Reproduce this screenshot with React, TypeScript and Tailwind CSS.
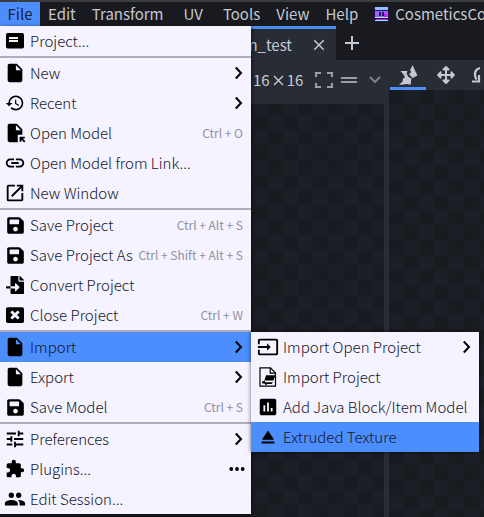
import { useState, type ReactNode } from "react";
import { FaArrowsAlt, FaFileImport, FaSave, FaWindowClose } from "react-icons/fa";
import {
  MdAdd,
  MdAssessment,
  MdClose,
  MdEject,
  MdExtension,
  MdFileOpen,
  MdHistory,
  MdInput,
  MdInsertDriveFile,
  MdLink,
  MdOpenInNew,
  MdPeople,
  MdTune,
} from "react-icons/md";

type Item = {
  icon: ReactNode;
  label: string;
  keys?: string;
  more?: "arrow" | "dots";
};

const md = "size-[22px]";
const save = <FaSave className="size-[19px]" />;
const file = <MdInsertDriveFile className={md} />;

function ProjectIcon() {
  return (
    <svg viewBox="0 0 18 16" className="h-4 w-[18px]" fill="none">
      <rect width="18" height="15.5" rx="1.8" fill="#000" />
      <path d="M3 4h9v2H3zM3 7h9v2H3z" fill="#f4f3ff" />
    </svg>
  );
}

function ProjectFileIcon() {
  return (
    <svg viewBox="0 0 20 20" className="size-5" fill="none" stroke="currentColor">
      <path d="M2 .8h10.5L17.5 6v13.2H2z" strokeWidth="1.2" />
      <path d="M12.2 1v5.2h5" strokeWidth="1.2" />
      <path d="M8 8.3h9.4l-2 5.2H6.4zM4 14.5l3-.8v1.6h8l-1.4 1.6H9l-.8 1.8-1.4-2-2.8-.4z" fill="currentColor" stroke="none" />
    </svg>
  );
}

const groups: Item[][] = [
  [{ icon: <ProjectIcon />, label: "Project..." }],
  [
    { icon: file, label: "New", more: "arrow" },
    { icon: <MdHistory className="size-5" />, label: "Recent", more: "arrow" },
    { icon: <MdFileOpen className={md} />, label: "Open Model", keys: "Ctrl + O" },
    { icon: <MdLink className={md} />, label: "Open Model from Link..." },
    { icon: <MdOpenInNew className={md} />, label: "New Window" },
  ],
  [
    { icon: save, label: "Save Project", keys: "Ctrl + Alt + S" },
    { icon: save, label: "Save Project As", keys: "Ctrl + Shift + Alt + S" },
    { icon: <FaFileImport className="size-[18px]" />, label: "Convert Project" },
    { icon: <FaWindowClose className="size-[18px]" />, label: "Close Project", keys: "Ctrl + W" },
  ],
  [
    { icon: file, label: "Import", more: "arrow" },
    { icon: file, label: "Export", more: "arrow" },
    { icon: save, label: "Save Model", keys: "Ctrl + S" },
  ],
  [
    { icon: <MdTune className={md} />, label: "Preferences", more: "arrow" },
    { icon: <MdExtension className="size-5" />, label: "Plugins...", more: "dots" },
    { icon: <MdPeople className={md} />, label: "Edit Session..." },
  ],
];

const importItems: Item[] = [
  { icon: <MdInput className={md} />, label: "Import Open Project", more: "arrow" },
  { icon: <ProjectFileIcon />, label: "Import Project" },
  { icon: <MdAssessment className={md} />, label: "Add Java Block/Item Model" },
  { icon: <MdEject className={md} />, label: "Extruded Texture" },
];

function MenuRow({ item, active, nested, onHover }: { item: Item; active: boolean; nested?: boolean; onHover: () => void }) {
  return (
    <button
      type="button"
      role="menuitem"
      onMouseEnter={onHover}
      className={`flex h-[30px] w-full items-center pr-2 text-left font-light text-black ${nested ? "pl-1.5" : "pl-1"} ${active ? "bg-[#4c8efe]" : ""}`}
    >
      <span className="flex w-[22px] shrink-0 justify-center">{item.icon}</span>
      <span className="ml-1 grow whitespace-nowrap text-[#15161f]">{item.label}</span>
      {item.keys && <span className="text-[12px] font-normal whitespace-nowrap text-[#92909f]">{item.keys}</span>}
      {item.more === "arrow" && (
        <svg viewBox="0 0 9 14" className="h-[14px] w-[9px]" fill="none" stroke="currentColor" strokeWidth="2">
          <path d="M1.8 1.5 7 7l-5.2 5.5" />
        </svg>
      )}
      {item.more === "dots" && (
        <svg viewBox="0 0 16 4" className="-mr-0.5 h-1 w-4" fill="currentColor">
          <circle cx="2.3" cy="2" r="1.9" />
          <circle cx="8" cy="2" r="1.9" />
          <circle cx="13.7" cy="2" r="1.9" />
        </svg>
      )}
    </button>
  );
}

export default function App() {
  const [hovered, setHovered] = useState("Import");
  const [subHovered, setSubHovered] = useState("Extruded Texture");
  return (
    <div className="relative flex h-screen flex-col overflow-hidden bg-[#181a1f] font-['Noto_Sans_CJK_SC','Open_Sans',sans-serif] text-[15px] leading-6 text-[#c5c8d2]">
      <nav className="flex h-[26px] shrink-0 border-t-2 border-[#3b3c40] whitespace-nowrap">
        <button type="button" className="w-10 shrink-0 bg-[#4c8efe] text-[#20212b]">File</button>
        <button type="button" className="shrink-0 px-2">Edit</button>
        <button type="button" className="shrink-0 px-2">Transform</button>
        <button type="button" className="ml-1 shrink-0 px-2">UV</button>
        <button type="button" className="ml-1 shrink-0 px-2">Tools</button>
        <button type="button" className="shrink-0 px-2">View</button>
        <button type="button" className="shrink-0 px-2">Help</button>
        <button type="button" className="ml-1 flex shrink-0 items-center gap-1.5 pl-1">
          <svg viewBox="0 0 15 15" className="size-[15px]" shapeRendering="crispEdges">
            <path fill="#22124a" d="M0 0h15v15H0z" />
            <path fill="#8fc0ff" d="M1 0h13v3H1z" />
            <path fill="#9a62ff" d="M1 4h13v6H1z" />
            <path fill="#2b1163" d="M5 5h2v4H5zM8 5h2v4H8z" />
            <path fill="#c31be8" d="M10 7h3v3h-3zM2 12h11v1H2z" />
            <path fill="#8ff0ff" d="M1 10h13v1H1zM1 13h13v1H1z" />
          </svg>
          CosmeticsCo
        </button>
      </nav>

      <div className="flex h-[34px] shrink-0 pl-[251px]">
        <div className="flex w-[85px] items-center justify-end gap-[18px] border-t-3 border-[#4c8efe] bg-[#282c34] pr-2">
          <span>n_test</span>
          <button type="button" aria-label="Close tab"><MdClose className="size-[18px]" /></button>
        </div>
        <button type="button" aria-label="New tab" className="w-8"><MdAdd className="mx-auto size-6" /></button>
      </div>

      <div className="flex min-h-0 grow pl-[251px]">
        <section className="flex w-[133px] shrink-0 flex-col">
          <div className="flex h-11 shrink-0 items-center bg-[#282c34] pr-1 pb-1 pl-[2px]">
            <span className="flex items-center whitespace-nowrap">16<MdClose className="size-[17px]" />16</span>
            <button type="button" aria-label="Fit view" className="ml-3 text-[#9b9ea8]">
              <svg viewBox="0 0 18 18" className="size-[18px]" fill="none" stroke="currentColor" strokeWidth="2">
                <path d="M1 6V2h5M12 2h5v4M17 12v4h-5M6 16H1v-4" />
              </svg>
            </button>
            <button type="button" aria-label="Layout" className="ml-2 text-[#9b9ea8]">
              <svg viewBox="0 0 16 8" className="h-2 w-4" fill="currentColor">
                <path d="M0 1h16v2H0zM0 5h16v2H0z" />
              </svg>
            </button>
            <button type="button" aria-label="More options" className="ml-3 text-[#7e818b]">
              <svg viewBox="0 0 12 8" className="h-2 w-3" fill="none" stroke="currentColor" strokeWidth="2">
                <path d="M1 1l5 5 5-5" />
              </svg>
            </button>
          </div>
          <div className="grow bg-[conic-gradient(#181b1f_25%,#1c1f26_0_50%,#181b1f_0_75%,#1c1f26_0)] bg-[length:30px_30px] bg-[position:17px_11px]" />
        </section>
        <div className="w-[5px] shrink-0 bg-[#282c34]" />
        <section className="flex grow flex-col overflow-hidden">
          <div className="flex h-[30px] shrink-0 bg-[#282c34] pl-px">
            <button type="button" aria-label="Vertex snap" className="flex h-[30px] w-9 shrink-0 justify-center border-b-3 border-[#4c8efe]">
              <svg viewBox="0 0 20 22" className="mt-1 h-[22px] w-5" fill="currentColor">
                <path d="M14.5 1l3 6.500 2 4-5 2.500-3.500-4 2.500-2-1.500-1.500z" />
                <path d="M2.500 7h7l-1 2.500 2 3.500 3 1.500-1 6.500-3-1-8.500 1 3.500-3.500.5-3 2-1-1.500-3z" />
              </svg>
            </button>
            <button type="button" aria-label="Move" className="flex h-[30px] w-10 shrink-0 items-center justify-center">
              <FaArrowsAlt className="size-[18px]" />
            </button>
            <button type="button" aria-label="Rotate" className="flex h-[30px] w-7 shrink-0 items-center justify-center">
              <svg viewBox="0 0 18 18" className="size-[18px]" fill="none" stroke="currentColor" strokeWidth="2.200">
                <path d="M9 2C4 3 2.500 8 5.500 13.500M1 15.500h7V9" />
              </svg>
            </button>
          </div>
          <div className="grow bg-[conic-gradient(#1c1f26_25%,#181b1f_0_50%,#1c1f26_0_75%,#181b1f_0)] bg-[length:30px_30px]" />
        </section>
      </div>

      <div role="menu" aria-label="File" className="absolute top-[26px] left-0 w-[251px] bg-[#f4f3ff] shadow-[1px_1px_4px_rgba(0,0,0,0.6)]">
        {groups.map((group, i) => (
          <div key={i} className={i > 0 ? "border-t-2 border-[#b0aebc]" : ""}>
            {group.map((item) => (
              <MenuRow key={item.label} item={item} active={hovered === item.label} onHover={() => setHovered(item.label)} />
            ))}
          </div>
        ))}
      </div>
      <div role="menu" aria-label="Import" className="absolute top-[332px] left-[251px] w-[228px] bg-[#f4f3ff] shadow-[0_0_4px_rgba(0,0,0,0.6)]">
        {importItems.map((item) => (
          <MenuRow key={item.label} item={item} nested active={subHovered === item.label} onHover={() => setSubHovered(item.label)} />
        ))}
      </div>
    </div>
  );
}
